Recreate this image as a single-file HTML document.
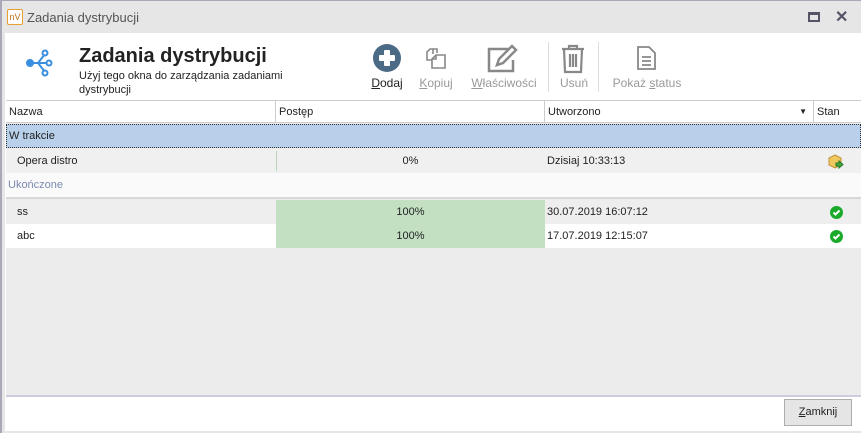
<!DOCTYPE html>
<html><head><meta charset="utf-8"><style>
*{margin:0;padding:0;box-sizing:border-box}
body{width:861px;height:433px;overflow:hidden;background:#e6e6e6;font-family:"Liberation Sans",sans-serif;font-size:11px;color:#222;position:relative}
.abs{position:absolute}
.win{left:0;top:0;width:861px;height:433px;border-left:2px solid #a8a8b8;border-top:1px solid #a8a8b8}
.title{left:27px;top:10px;font-size:13px;color:#555}
.content{left:5px;top:33px;width:856px;height:398px;background:#fff}
.btn{text-align:center;color:#999;font-size:12px}
.btn u{text-decoration:underline}
.grid{left:6px;top:100px;width:855px;height:297px;background:#ececec;border-top:1px solid #ccc;border-bottom:2px solid #ccccdd}
.hdr{left:0;top:0;width:855px;height:22px;background:#fff;border-bottom:1px solid #ccc}
.hc{top:0;height:22px;line-height:22px;padding-left:3px;border-right:1px solid #ccc;font-size:11px}
.row{left:0;width:855px;height:24px;line-height:24px}
.cell{top:0;height:24px}
</style></head><body>
<div class="abs win"></div>
<div class="abs" style="left:7px;top:9px;width:16px;height:16px;border:1px solid #e8a030;border-radius:2px;background:#fff;font-size:9px;line-height:14px;text-align:center;color:#c07010">nV</div>
<div class="abs title">Zadania dystrybucji</div>
<div class="abs" style="left:808px;top:12px;width:12px;height:10px;border:2px solid #556;border-top-width:3px"></div>
<div class="abs" style="left:835px;top:7px;font-size:16px;font-weight:bold;color:#556">✕</div>
<div class="abs content"></div>
<svg class="abs" style="left:24px;top:48px" width="30" height="30" viewBox="0 0 30 30"><g stroke="#3a8ee0" stroke-width="2" fill="none"><line x1="6" y1="15" x2="14" y2="15"/><line x1="14" y1="15" x2="21" y2="6"/><line x1="14" y1="15" x2="21" y2="24"/><line x1="14" y1="15" x2="22" y2="15"/><circle cx="21" cy="5" r="2.5" fill="#fff"/><circle cx="25" cy="15" r="2.5" fill="#fff"/><circle cx="21" cy="25" r="2.5" fill="#fff"/></g><circle cx="6" cy="15" r="4" fill="#3a8ee0"/></svg>
<div class="abs" style="left:79px;top:45px;font-size:20px;font-weight:bold;color:#222">Zadania dystrybucji</div>
<div class="abs" style="left:79px;top:69px;font-size:11px;line-height:14px;width:230px">Użyj tego okna do zarządzania zadaniami dystrybucji</div>
<svg class="abs" style="left:373px;top:44px" width="28" height="28"><circle cx="14" cy="14" r="14" fill="#4a6a85"/><rect x="6" y="11" width="16" height="6" rx="1" fill="#fff"/><rect x="11" y="6" width="6" height="16" rx="1" fill="#fff"/></svg>
<div class="abs btn" style="left:366px;top:76px;width:42px;color:#222"><u>D</u>odaj</div>
<svg class="abs" style="left:424px;top:46px" width="24" height="24" fill="none" stroke="#888" stroke-width="1.6"><path d="M9 8V3H6L3 6v8h5"/><path d="M9 3h4v4"/><path d="M13 9h-1l-4 4v9h13V9z"/><path d="M8 13h4V9"/></svg>
<div class="abs btn" style="left:416px;top:76px;width:40px"><u>K</u>opiuj</div>
<svg class="abs" style="left:485px;top:43px" width="36" height="30" fill="none" stroke="#888" stroke-width="2.5"><path d="M24 6H4v22h24V17"/><path d="M12 22l2-6 13-13 4 4-13 13z"/></svg>
<div class="abs btn" style="left:466px;top:76px;width:76px"><u>W</u>łaściwości</div>
<div class="abs" style="left:548px;top:42px;width:1px;height:50px;background:#ddd"></div>
<svg class="abs" style="left:559px;top:44px" width="28" height="30" fill="none" stroke="#888" stroke-width="2.2"><path d="M3 5h22M10 5V2h8v3M5 5l1 23h16l1-23"/><path d="M11 10v13M14 10v13M17 10v13"/></svg>
<div class="abs btn" style="left:554px;top:76px;width:40px">Usuń</div>
<div class="abs" style="left:598px;top:42px;width:1px;height:50px;background:#ddd"></div>
<svg class="abs" style="left:636px;top:45px" width="22" height="26" fill="none" stroke="#888" stroke-width="1.8"><path d="M2 2h11l6 6v16H2z"/><path d="M6 12h9M6 16h9M6 20h9"/></svg>
<div class="abs btn" style="left:606px;top:76px;width:82px">Pokaż <u>s</u>tatus</div>

<div class="abs grid">
<div class="abs hdr">
<div class="abs hc" style="left:0;width:270px">Nazwa</div>
<div class="abs hc" style="left:270px;width:269px">Postęp</div>
<div class="abs hc" style="left:539px;width:269px">Utworzono<span style="position:absolute;right:6px;font-size:8px">▼</span></div>
<div class="abs hc" style="left:808px;width:47px;border:none">Stan</div>
</div>
<div class="abs row" style="top:23px;background:#b8d0ea;border:1px dotted #333;padding-left:2px;line-height:22px">W trakcie</div>
<div class="abs row" style="top:48px;background:#f0f0f0">
<span class="abs cell" style="left:11px">Opera distro</span>
<div class="abs" style="left:270px;top:2px;width:1px;height:20px;background:#b5d5b5"></div>
<span class="abs cell" style="left:270px;width:269px;text-align:center">0%</span>
<span class="abs cell" style="left:541px">Dzisiaj 10:33:13</span>
<svg class="abs" style="left:822px;top:5px" width="16" height="15"><path d="M7 1l6 3v7l-6 3-6-3V4z" fill="#f0c860" stroke="#c09030"/><path d="M8 9h3V7l4 3.5-4 3.5v-2H8z" fill="#4a4" stroke="#272"/></svg>
</div>
<div class="abs row" style="top:72px;background:#fafafa;color:#7a8ab0;padding-left:2px;border-bottom:2px solid #d8d8d8;height:26px">Ukończone</div>
<div class="abs row" style="top:99px;background:#eeeeee">
<span class="abs cell" style="left:11px">ss</span>
<span class="abs cell" style="left:270px;width:269px;text-align:center;background:#c3e0c3">100%</span>
<span class="abs cell" style="left:541px">30.07.2019 16:07:12</span>
<svg class="abs" style="left:824px;top:6px" width="13" height="13"><circle cx="6.5" cy="6.5" r="6.5" fill="#1aaa2a"/><path d="M3.5 6.5l2 2 4-4" stroke="#fff" stroke-width="2" fill="none"/></svg>
</div>
<div class="abs row" style="top:123px;background:#fff">
<span class="abs cell" style="left:11px">abc</span>
<span class="abs cell" style="left:270px;width:269px;text-align:center;background:#c3e0c3">100%</span>
<span class="abs cell" style="left:541px">17.07.2019 12:15:07</span>
<svg class="abs" style="left:824px;top:6px" width="13" height="13"><circle cx="6.5" cy="6.5" r="6.5" fill="#1aaa2a"/><path d="M3.5 6.5l2 2 4-4" stroke="#fff" stroke-width="2" fill="none"/></svg>
</div>
</div>
<div class="abs" style="left:784px;top:399px;width:68px;height:27px;border:1px solid #adadad;background:#e5e5e5;text-align:center;line-height:25px;font-size:11px"><u>Z</u>amknij</div>
</body></html>
